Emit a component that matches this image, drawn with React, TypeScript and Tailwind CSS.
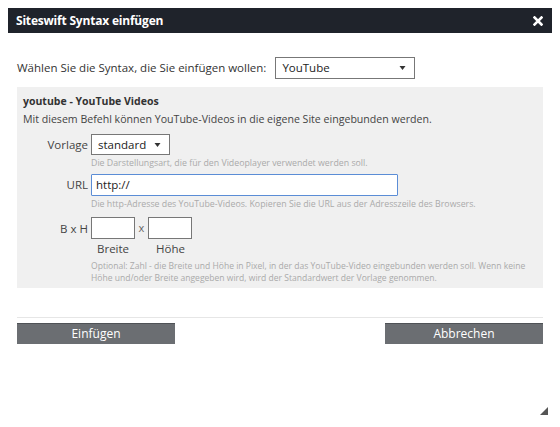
import React from "react";

const Caret = () => (
  <svg width="7" height="6" viewBox="0 0 7 6" className="block">
    <path d="M0.5 1 L6.5 1 L3.5 5 Z" fill="#333" />
  </svg>
);

export default function App() {
  return (
    <div
      className="w-[560px] h-[427px] bg-white relative overflow-hidden"
      style={{ fontFamily: '"Open Sans", "Liberation Sans", sans-serif' }}
    >
      <div className="pt-[8px] px-[8px]">
        <div className="h-[25px] bg-[#1f232b] flex items-center justify-between pl-[8px] pr-[9px]">
          <span className="text-white font-bold text-[12px] tracking-[-0.2px]">Siteswift Syntax einfügen</span>
          <svg width="10" height="10" viewBox="0 0 10 10">
            <path d="M1.5 1.5 L8.5 8.5 M8.5 1.5 L1.5 8.5" stroke="#fff" strokeWidth="2.6" strokeLinecap="square" />
          </svg>
        </div>
        <div className="px-[9px]">
          <div className="flex items-center mt-[24px] h-[22px]">
            <span className="text-[11.5px] text-[#333]">Wählen Sie die Syntax, die Sie einfügen wollen:</span>
            <div className="ml-[9px] w-[140px] h-[22px] border border-[#777] bg-white flex items-center justify-between pl-[6px] pr-[8px]">
              <span className="text-[11.5px] text-[#222]">YouTube</span>
              <Caret />
            </div>
          </div>
          <div className="mt-[8px] bg-[#f0f0f0] h-[201px] px-[6px] pt-[6px]">
            <div className="text-[10.5px] font-bold text-[#333] leading-[16px]">youtube - YouTube Videos</div>
            <div className="text-[10.6px] text-[#444] leading-[18px] mt-[1px]">
              Mit diesem Befehl können YouTube-Videos in die eigene Site eingebunden werden.
            </div>
            <div className="flex mt-[6px]">
              <div className="w-[65px] shrink-0 text-right text-[11.5px] text-[#444] pt-[2px]">Vorlage</div>
              <div className="ml-[3px] flex flex-col flex-1">
                <div className="w-[79px] h-[21px] border border-[#777] bg-white flex items-center justify-between pl-[6px] pr-[8px]">
                  <span className="text-[11.5px] text-[#222]">standard</span>
                  <Caret />
                </div>
                <div className="text-[8.8px] text-[#aaa] leading-[14px] mt-[1px]">
                  Die Darstellungsart, die für den Videoplayer verwendet werden soll.
                </div>
              </div>
            </div>
            <div className="flex mt-[4px]">
              <div className="w-[65px] shrink-0 text-right text-[11.5px] text-[#444] pt-[2px]">URL</div>
              <div className="ml-[3px] flex flex-col flex-1">
                <div className="w-[307px] h-[22px] border border-[#5b8dd6] bg-white flex items-center pl-[4px] rounded-[1px]">
                  <span className="text-[11.5px] text-[#222]">http://</span>
                </div>
                <div className="text-[8.8px] text-[#aaa] leading-[14px] mt-[1px]">
                  Die http-Adresse des YouTube-Videos. Kopieren Sie die URL aus der Adresszeile des Browsers.
                </div>
              </div>
            </div>
            <div className="flex mt-[6px]">
              <div className="w-[65px] shrink-0 text-right text-[11.5px] text-[#444] pt-[3px]">B x H</div>
              <div className="ml-[3px] flex flex-col flex-1">
                <div className="flex items-center">
                  <div className="w-[44px] h-[22px] border border-[#777] bg-white" />
                  <span className="text-[11px] text-[#666] w-[13px] text-center">x</span>
                  <div className="w-[44px] h-[22px] border border-[#777] bg-white" />
                </div>
                <div className="flex text-[11.5px] text-[#444] leading-[17px] mt-[1px]">
                  <span className="w-[59px] pl-[6px]">Breite</span>
                  <span className="pl-[6px]">Höhe</span>
                </div>
                <div className="text-[8.55px] text-[#aaa] leading-[12px] mt-[3px]">
                  Optional: Zahl - die Breite und Höhe in Pixel, in der das YouTube-Video eingebunden werden soll. Wenn keine Höhe und/oder Breite angegeben wird, wird der Standardwert der Vorlage genommen.
                </div>
              </div>
            </div>
          </div>
          <div className="mt-[29px] border-t border-[#e6e6e6]" />
          <div className="mt-[5px] flex justify-between">
            <div className="w-[158px] h-[21px] bg-[#6b6e72] border-t border-[#4f5256] flex items-center justify-center text-white text-[12px]">
              Einfügen
            </div>
            <div className="w-[158px] h-[21px] bg-[#6b6e72] border-t border-[#4f5256] flex items-center justify-center text-white text-[12px]">
              Abbrechen
            </div>
          </div>
        </div>
      </div>
      <svg className="absolute left-[540px] top-[407px]" width="8" height="8" viewBox="0 0 8 8">
        <path d="M8 0 L8 8 L0 8 Z" fill="#555" />
      </svg>
    </div>
  );
}
